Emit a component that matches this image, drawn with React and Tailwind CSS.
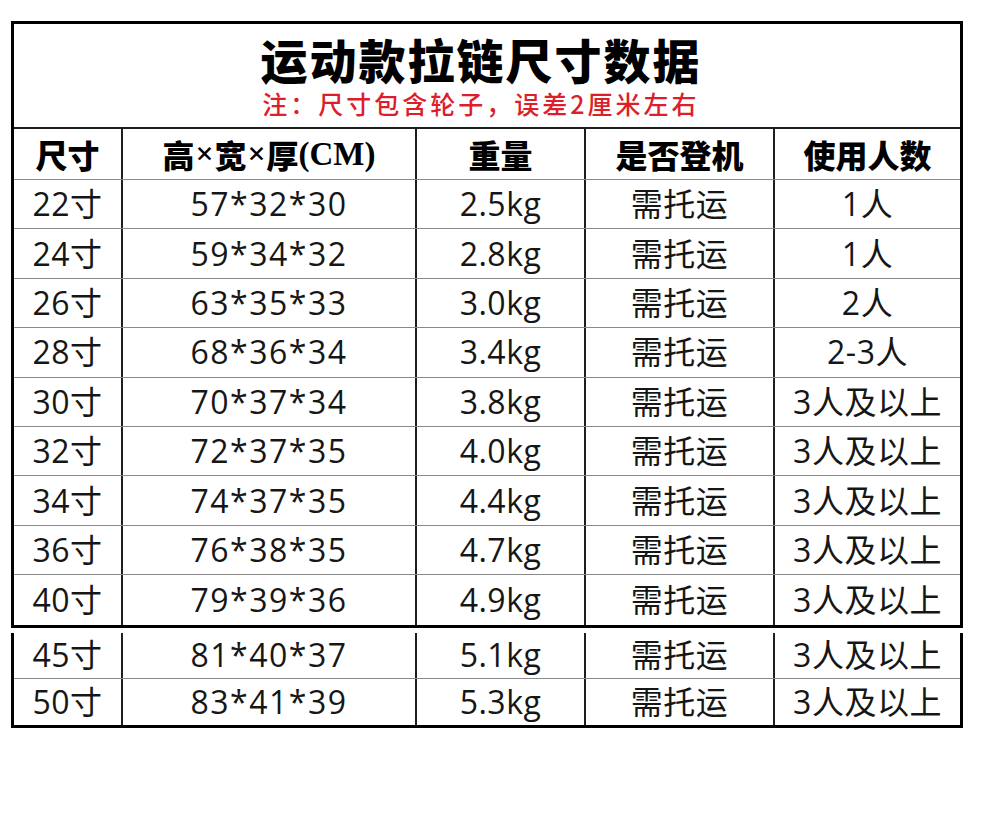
import React from "react";

const rows = [
  ["22寸", "57*32*30", "2.5kg", "需托运", "1人"],
  ["24寸", "59*34*32", "2.8kg", "需托运", "1人"],
  ["26寸", "63*35*33", "3.0kg", "需托运", "2人"],
  ["28寸", "68*36*34", "3.4kg", "需托运", "2-3人"],
  ["30寸", "70*37*34", "3.8kg", "需托运", "3人及以上"],
  ["32寸", "72*37*35", "4.0kg", "需托运", "3人及以上"],
  ["34寸", "74*37*35", "4.4kg", "需托运", "3人及以上"],
  ["36寸", "76*38*35", "4.7kg", "需托运", "3人及以上"],
  ["40寸", "79*39*36", "4.9kg", "需托运", "3人及以上"],
];

const extra = [
  ["45寸", "81*40*37", "5.1kg", "需托运", "3人及以上"],
  ["50寸", "83*41*39", "5.3kg", "需托运", "3人及以上"],
];

const grid = "grid grid-cols-[107px_294px_169px_189px_1fr]";
const cjk = { fontFamily: '"Noto Sans CJK SC", sans-serif' };
const body = { fontFamily: '"Open Sans", "Noto Sans CJK SC", sans-serif' };

function Row({ r, last, h }) {
  return (
    <div className={`${grid} ${h} ${last ? "" : "border-b border-[#8a8a8a]"}`}>
      {r.map((c, i) => (
        <div
          key={i}
          className={`flex items-center justify-center text-[32px] leading-none text-[#161616] ${
            i === 0 ? "" : "border-l-2 border-[#1e1e1e]"
          } ${i === 1 ? "tracking-[1.5px]" : "tracking-[0.5px]"}`}
          style={body}
        >
          {c}
        </div>
      ))}
    </div>
  );
}

export default function App() {
  return (
    <div className="w-[990px] h-[825px] bg-white pt-[21px] pl-[11px]">
      <div className="w-[952px] border-[3px] border-black">
        {/* title */}
        <div className="h-[105px] border-b-2 border-[#1e1e1e] flex flex-col items-center pt-[10px] pr-3" style={cjk}>
          <div className="h-[48px] flex items-center text-[47px] font-black leading-none tracking-[2px] text-black">
            运动款拉链尺寸数据
          </div>
          <div className="mt-[6px] h-[30px] flex items-center text-[25px] font-medium leading-none tracking-[3px] text-[#dc1f2b]">
            注：尺寸包含轮子，误差2厘米左右
          </div>
        </div>
        {/* header */}
        <div className={`${grid} h-[51px] border-b border-[#8a8a8a]`} style={cjk}>
          <div className="flex items-center justify-center text-[32px] font-black leading-none">尺寸</div>
          <div className="flex items-center justify-center text-[32px] font-black leading-none border-l-2 border-[#1e1e1e]">
            高<span className="text-[20px]">×</span>宽<span className="text-[20px]">×</span>厚
            <span className="text-[33px] font-bold" style={{ fontFamily: '"Liberation Serif", serif' }}>(CM)</span>
          </div>
          <div className="flex items-center justify-center text-[32px] font-black leading-none border-l-2 border-[#1e1e1e]">重量</div>
          <div className="flex items-center justify-center text-[32px] font-black leading-none border-l-2 border-[#1e1e1e]">是否登机</div>
          <div className="flex items-center justify-center text-[32px] font-black leading-none border-l-2 border-[#1e1e1e]">使用人数</div>
        </div>
        {rows.map((r, i) => (
          <Row key={r[0]} r={r} last={i === rows.length - 1} h="h-[49.4px]" />
        ))}
      </div>
      <div className="w-[952px] mt-[5px] border-x-[3px] border-b-[3px] border-black">
        {extra.map((r, i) => (
          <Row key={r[0]} r={r} last={i === extra.length - 1} h="h-[46px]" />
        ))}
      </div>
    </div>
  );
}
